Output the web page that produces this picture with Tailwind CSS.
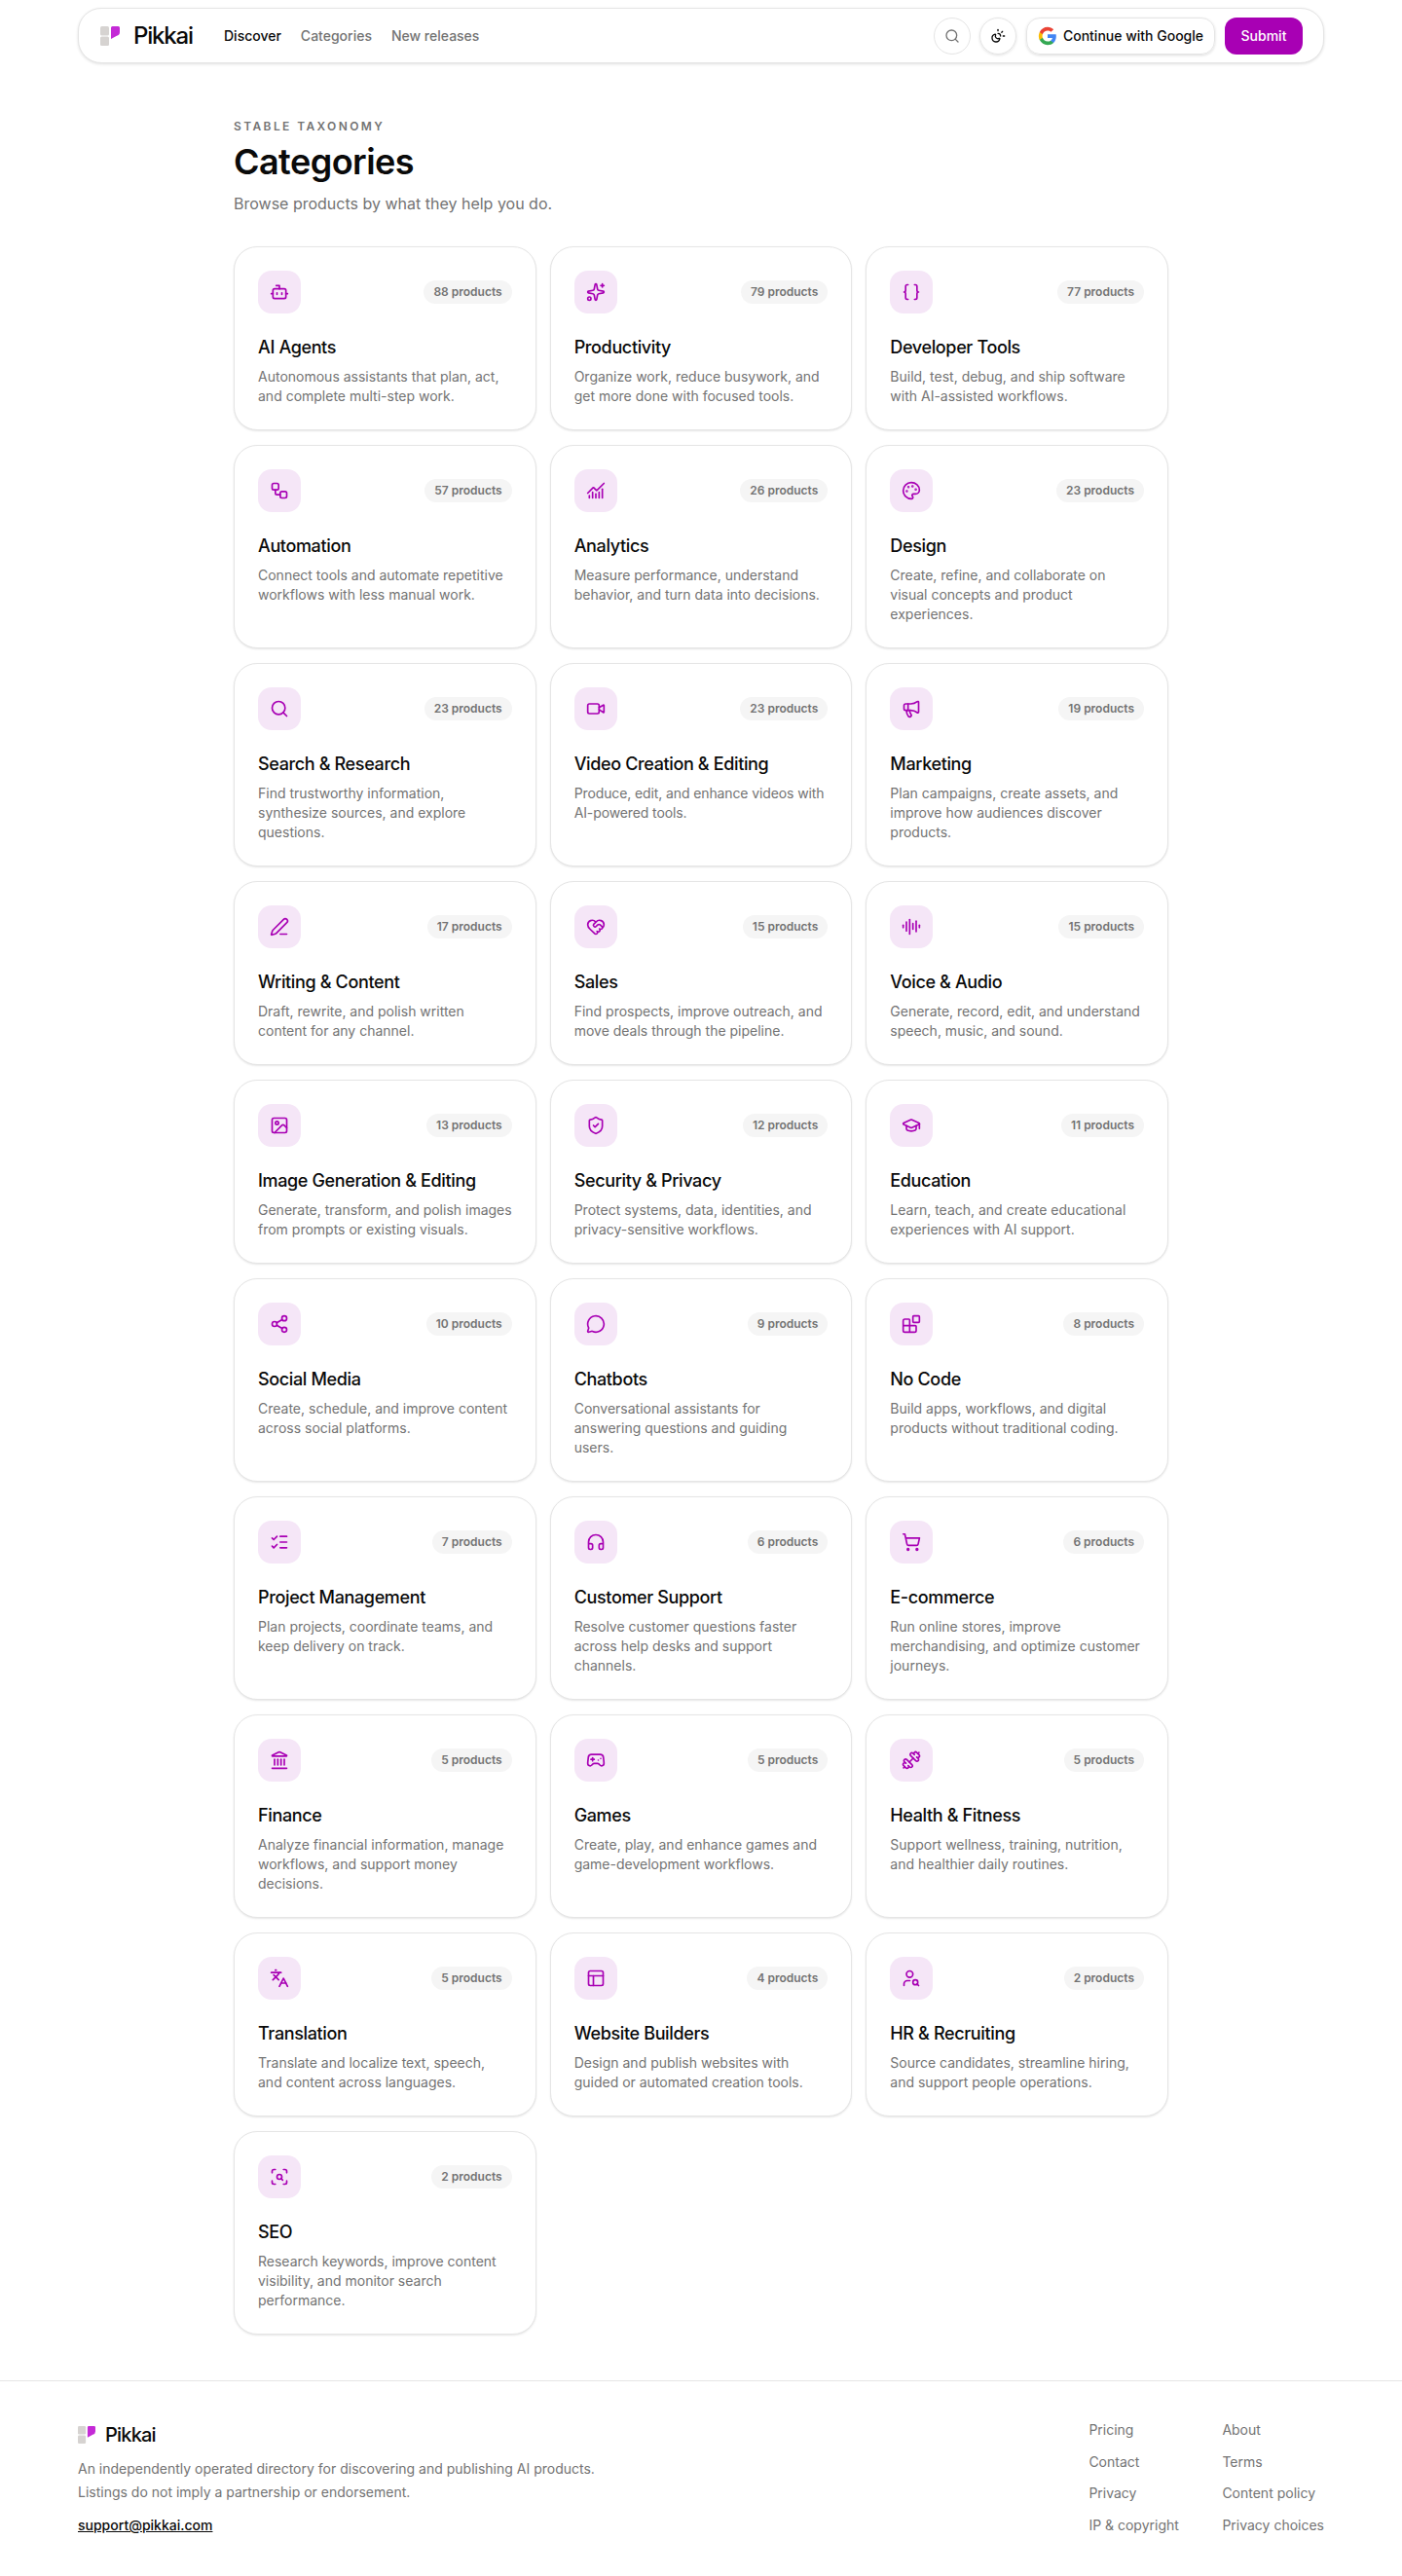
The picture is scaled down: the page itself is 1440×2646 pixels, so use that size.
<!DOCTYPE html>
<html lang="en">
<head>
<meta charset="utf-8">
<title>Categories - Pikkai</title>
<script src="https://cdn.jsdelivr.net/npm/@tailwindcss/browser@4"></script>
</head>
<body class="bg-white font-['Inter',sans-serif] text-[#0a0a0a] h-[2646px] overflow-hidden">
<header class="pt-[8px] px-[80px]">
  <nav class="h-[57px] rounded-[24px] border border-[#e5e5e5] shadow-[0_1px_3px_rgba(0,0,0,0.12)] bg-white flex items-center justify-between pl-[22px] pr-[21px]">
    <div class="flex items-center">
      <a class="flex items-center gap-[14px] w-[127px]">
        <svg viewBox="0 0 20 20" class="w-5 h-5 shrink-0"><rect x="0" y="0" width="9" height="9.5" rx="1.5" fill="#d6d3d1"/><rect x="0" y="10.5" width="9" height="9.5" rx="1.5" fill="#d6d3d1"/><path d="M11 1.5a1.5 1.5 0 0 1 1.5-1.5H18.5a1.5 1.5 0 0 1 1.5 1.5V6a4 4 0 0 1-3 3.8L11 13z" fill="#c42ad6"/></svg>
        <span class="text-[24px] leading-none font-medium tracking-[-0.05em] text-[#0a0a0a]">Pikkai</span>
      </a>
      <div class="flex items-center gap-[20px] text-[14px] font-medium">
        <a class="text-[#0a0a0a]">Discover</a>
        <a class="text-[#737373]">Categories</a>
        <a class="text-[#737373]">New releases</a>
      </div>
    </div>
    <div class="flex items-center">
      <button class="w-[38px] h-[38px] rounded-full border border-[#e5e5e5] flex items-center justify-center text-[#737373]">
        <svg viewBox="0 0 24 24" class="w-4 h-4" fill="none" stroke="currentColor" stroke-width="2" stroke-linecap="round" stroke-linejoin="round"><path d="m21 21-4.34-4.34"/><circle cx="11" cy="11" r="8"/></svg>
      </button>
      <button class="ml-[9px] w-[38px] h-[38px] rounded-full border border-[#e5e5e5] shadow-[0_1px_3px_rgba(0,0,0,0.12)] flex items-center justify-center text-[#0a0a0a]">
        <svg viewBox="0 0 24 24" class="w-4 h-4" fill="none" stroke="currentColor" stroke-width="2" stroke-linecap="round" stroke-linejoin="round"><path d="M12 2v2"/><path d="M14.837 16.385a6 6 0 1 1-7.223-7.222c.624-.147.97.66.715 1.248a4 4 0 0 0 5.26 5.259c.589-.255 1.396.09 1.248.715"/><path d="M16 12a4 4 0 0 0-4-4"/><path d="m19 5-1.256 1.256"/><path d="M20 12h2"/></svg>
      </button>
      <button class="ml-[10px] w-[194px] h-[38px] rounded-[14px] border border-[#e5e5e5] shadow-[0_1px_3px_rgba(0,0,0,0.14)] flex items-center justify-center gap-[6px] text-[14px] font-medium text-[#0a0a0a]">
        <svg viewBox="0 0 24 24" class="w-5 h-5"><path fill="#4285F4" d="M22.56 12.25c0-.78-.07-1.53-.2-2.25H12v4.26h5.92c-.26 1.37-1.04 2.53-2.21 3.31v2.77h3.57c2.08-1.92 3.28-4.74 3.28-8.09z"/><path fill="#34A853" d="M12 23c2.97 0 5.46-.98 7.28-2.66l-3.57-2.77c-.98.66-2.23 1.06-3.71 1.06-2.86 0-5.29-1.93-6.16-4.53H2.18v2.84C3.99 20.53 7.7 23 12 23z"/><path fill="#FBBC05" d="M5.84 14.09c-.22-.66-.35-1.36-.35-2.09s.13-1.43.35-2.09V7.07H2.18C1.43 8.55 1 10.22 1 12s.43 3.45 1.18 4.93l2.85-2.22.81-.62z"/><path fill="#EA4335" d="M12 5.38c1.62 0 3.06.56 4.21 1.64l3.15-3.15C17.45 2.09 14.97 1 12 1 7.7 1 3.99 3.47 2.18 7.07l3.66 2.84c.87-2.6 3.3-4.53 6.16-4.53z"/></svg>
        Continue with Google
      </button>
      <button class="ml-[10px] w-[80px] h-[38px] rounded-[12px] bg-[#a800b4] text-white text-[14px] font-medium">Submit</button>
    </div>
  </nav>
</header>

<main class="w-[960px] mx-auto pt-[57px]">
  <p class="text-[12px] leading-[16px] font-semibold tracking-[0.2em] text-[#737373]">STABLE TAXONOMY</p>
  <h1 class="mt-[8px] text-[36px] leading-[40px] font-semibold tracking-[-0.015em] text-[#0a0a0a]">Categories</h1>
  <p class="mt-[11px] text-[16px] leading-[24px] text-[#737373]">Browse products by what they help you do.</p>

  <div class="mt-[32px] grid grid-cols-3 gap-x-[14px] gap-y-[15px]">

    <a class="block rounded-[24px] border border-[#e5e5e5] shadow-[0_1px_2px_rgba(0,0,0,0.1)] bg-white p-6">
      <div class="flex items-center justify-between">
        <span class="w-[44px] h-[44px] rounded-[14px] bg-[#f5e6f7] text-[#a800b4] flex items-center justify-center"><svg viewBox="0 0 24 24" class="w-5 h-5" fill="none" stroke="currentColor" stroke-width="2" stroke-linecap="round" stroke-linejoin="round"><path d="M12 8V4H8"/><rect width="16" height="12" x="4" y="8" rx="2"/><path d="M2 14h2"/><path d="M20 14h2"/><path d="M15 13v2"/><path d="M9 13v2"/></svg></span>
        <span class="h-[24px] px-[10px] rounded-full bg-[#f5f5f5] text-[12px] leading-[24px] font-semibold text-[#737373]">88 products</span>
      </div>
      <h2 class="mt-[21px] text-[18px] leading-[28px] font-medium tracking-[-0.02em] text-[#0a0a0a]">AI Agents</h2>
      <p class="mt-[6px] text-[14px] leading-[20px] text-[#737373]">Autonomous assistants that plan, act, and complete multi-step work.</p>
    </a>

    <a class="block rounded-[24px] border border-[#e5e5e5] shadow-[0_1px_2px_rgba(0,0,0,0.1)] bg-white p-6">
      <div class="flex items-center justify-between">
        <span class="w-[44px] h-[44px] rounded-[14px] bg-[#f5e6f7] text-[#a800b4] flex items-center justify-center"><svg viewBox="0 0 24 24" class="w-5 h-5" fill="none" stroke="currentColor" stroke-width="2" stroke-linecap="round" stroke-linejoin="round"><path d="M11.017 2.814a1 1 0 0 1 1.966 0l1.051 5.558a2 2 0 0 0 1.594 1.594l5.558 1.051a1 1 0 0 1 0 1.966l-5.558 1.051a2 2 0 0 0-1.594 1.594l-1.051 5.558a1 1 0 0 1-1.966 0l-1.051-5.558a2 2 0 0 0-1.594-1.594l-5.558-1.051a1 1 0 0 1 0-1.966l5.558-1.051a2 2 0 0 0 1.594-1.594z"/><path d="M20 2v4"/><path d="M22 4h-4"/><circle cx="4" cy="20" r="2"/></svg></span>
        <span class="h-[24px] px-[10px] rounded-full bg-[#f5f5f5] text-[12px] leading-[24px] font-semibold text-[#737373]">79 products</span>
      </div>
      <h2 class="mt-[21px] text-[18px] leading-[28px] font-medium tracking-[-0.02em] text-[#0a0a0a]">Productivity</h2>
      <p class="mt-[6px] text-[14px] leading-[20px] text-[#737373]">Organize work, reduce busywork, and get more done with focused tools.</p>
    </a>

    <a class="block rounded-[24px] border border-[#e5e5e5] shadow-[0_1px_2px_rgba(0,0,0,0.1)] bg-white p-6">
      <div class="flex items-center justify-between">
        <span class="w-[44px] h-[44px] rounded-[14px] bg-[#f5e6f7] text-[#a800b4] flex items-center justify-center"><svg viewBox="0 0 24 24" class="w-5 h-5" fill="none" stroke="currentColor" stroke-width="2" stroke-linecap="round" stroke-linejoin="round"><path d="M8 3H7a2 2 0 0 0-2 2v5a2 2 0 0 1-2 2 2 2 0 0 1 2 2v5c0 1.1.9 2 2 2h1"/><path d="M16 21h1a2 2 0 0 0 2-2v-5c0-1.1.9-2 2-2a2 2 0 0 1-2-2V5a2 2 0 0 0-2-2h-1"/></svg></span>
        <span class="h-[24px] px-[10px] rounded-full bg-[#f5f5f5] text-[12px] leading-[24px] font-semibold text-[#737373]">77 products</span>
      </div>
      <h2 class="mt-[21px] text-[18px] leading-[28px] font-medium tracking-[-0.02em] text-[#0a0a0a]">Developer Tools</h2>
      <p class="mt-[6px] text-[14px] leading-[20px] text-[#737373]">Build, test, debug, and ship software with AI-assisted workflows.</p>
    </a>

    <a class="block rounded-[24px] border border-[#e5e5e5] shadow-[0_1px_2px_rgba(0,0,0,0.1)] bg-white p-6">
      <div class="flex items-center justify-between">
        <span class="w-[44px] h-[44px] rounded-[14px] bg-[#f5e6f7] text-[#a800b4] flex items-center justify-center"><svg viewBox="0 0 24 24" class="w-5 h-5" fill="none" stroke="currentColor" stroke-width="2" stroke-linecap="round" stroke-linejoin="round"><rect width="8" height="8" x="3" y="3" rx="2"/><path d="M7 11v4a2 2 0 0 0 2 2h4"/><rect width="8" height="8" x="13" y="13" rx="2"/></svg></span>
        <span class="h-[24px] px-[10px] rounded-full bg-[#f5f5f5] text-[12px] leading-[24px] font-semibold text-[#737373]">57 products</span>
      </div>
      <h2 class="mt-[21px] text-[18px] leading-[28px] font-medium tracking-[-0.02em] text-[#0a0a0a]">Automation</h2>
      <p class="mt-[6px] text-[14px] leading-[20px] text-[#737373]">Connect tools and automate repetitive workflows with less manual work.</p>
    </a>

    <a class="block rounded-[24px] border border-[#e5e5e5] shadow-[0_1px_2px_rgba(0,0,0,0.1)] bg-white p-6">
      <div class="flex items-center justify-between">
        <span class="w-[44px] h-[44px] rounded-[14px] bg-[#f5e6f7] text-[#a800b4] flex items-center justify-center"><svg viewBox="0 0 24 24" class="w-5 h-5" fill="none" stroke="currentColor" stroke-width="2" stroke-linecap="round" stroke-linejoin="round"><path d="M12 16v5"/><path d="M16 14v7"/><path d="M20 10v11"/><path d="m22 3-8.646 8.646a.5.5 0 0 1-.708 0L9.354 8.354a.5.5 0 0 0-.708 0L2 15"/><path d="M4 18v3"/><path d="M8 14v7"/></svg></span>
        <span class="h-[24px] px-[10px] rounded-full bg-[#f5f5f5] text-[12px] leading-[24px] font-semibold text-[#737373]">26 products</span>
      </div>
      <h2 class="mt-[21px] text-[18px] leading-[28px] font-medium tracking-[-0.02em] text-[#0a0a0a]">Analytics</h2>
      <p class="mt-[6px] text-[14px] leading-[20px] text-[#737373]">Measure performance, understand behavior, and turn data into decisions.</p>
    </a>

    <a class="block rounded-[24px] border border-[#e5e5e5] shadow-[0_1px_2px_rgba(0,0,0,0.1)] bg-white p-6">
      <div class="flex items-center justify-between">
        <span class="w-[44px] h-[44px] rounded-[14px] bg-[#f5e6f7] text-[#a800b4] flex items-center justify-center"><svg viewBox="0 0 24 24" class="w-5 h-5" fill="none" stroke="currentColor" stroke-width="2" stroke-linecap="round" stroke-linejoin="round"><path d="M12 22a1 1 0 0 1 0-20 10 9 0 0 1 10 9 5 5 0 0 1-5 5h-2.25a1.75 1.75 0 0 0-1.4 2.8l.3.4a1.75 1.75 0 0 1-1.4 2.8z"/><circle cx="13.5" cy="6.5" r=".5" fill="currentColor"/><circle cx="17.5" cy="10.5" r=".5" fill="currentColor"/><circle cx="6.5" cy="12.5" r=".5" fill="currentColor"/><circle cx="8.5" cy="7.5" r=".5" fill="currentColor"/></svg></span>
        <span class="h-[24px] px-[10px] rounded-full bg-[#f5f5f5] text-[12px] leading-[24px] font-semibold text-[#737373]">23 products</span>
      </div>
      <h2 class="mt-[21px] text-[18px] leading-[28px] font-medium tracking-[-0.02em] text-[#0a0a0a]">Design</h2>
      <p class="mt-[6px] text-[14px] leading-[20px] text-[#737373]">Create, refine, and collaborate on visual concepts and product experiences.</p>
    </a>

    <a class="block rounded-[24px] border border-[#e5e5e5] shadow-[0_1px_2px_rgba(0,0,0,0.1)] bg-white p-6">
      <div class="flex items-center justify-between">
        <span class="w-[44px] h-[44px] rounded-[14px] bg-[#f5e6f7] text-[#a800b4] flex items-center justify-center"><svg viewBox="0 0 24 24" class="w-5 h-5" fill="none" stroke="currentColor" stroke-width="2" stroke-linecap="round" stroke-linejoin="round"><path d="m21 21-4.34-4.34"/><circle cx="11" cy="11" r="8"/></svg></span>
        <span class="h-[24px] px-[10px] rounded-full bg-[#f5f5f5] text-[12px] leading-[24px] font-semibold text-[#737373]">23 products</span>
      </div>
      <h2 class="mt-[21px] text-[18px] leading-[28px] font-medium tracking-[-0.02em] text-[#0a0a0a]">Search &amp; Research</h2>
      <p class="mt-[6px] text-[14px] leading-[20px] text-[#737373]">Find trustworthy information, synthesize sources, and explore questions.</p>
    </a>

    <a class="block rounded-[24px] border border-[#e5e5e5] shadow-[0_1px_2px_rgba(0,0,0,0.1)] bg-white p-6">
      <div class="flex items-center justify-between">
        <span class="w-[44px] h-[44px] rounded-[14px] bg-[#f5e6f7] text-[#a800b4] flex items-center justify-center"><svg viewBox="0 0 24 24" class="w-5 h-5" fill="none" stroke="currentColor" stroke-width="2" stroke-linecap="round" stroke-linejoin="round"><path d="m16 13 5.223 3.482a.5.5 0 0 0 .777-.416V7.87a.5.5 0 0 0-.752-.432L16 10.5"/><rect x="2" y="6" width="14" height="12" rx="2"/></svg></span>
        <span class="h-[24px] px-[10px] rounded-full bg-[#f5f5f5] text-[12px] leading-[24px] font-semibold text-[#737373]">23 products</span>
      </div>
      <h2 class="mt-[21px] text-[18px] leading-[28px] font-medium tracking-[-0.02em] text-[#0a0a0a]">Video Creation &amp; Editing</h2>
      <p class="mt-[6px] text-[14px] leading-[20px] tracking-[-0.008em] text-[#737373]">Produce, edit, and enhance videos with AI-powered tools.</p>
    </a>

    <a class="block rounded-[24px] border border-[#e5e5e5] shadow-[0_1px_2px_rgba(0,0,0,0.1)] bg-white p-6">
      <div class="flex items-center justify-between">
        <span class="w-[44px] h-[44px] rounded-[14px] bg-[#f5e6f7] text-[#a800b4] flex items-center justify-center"><svg viewBox="0 0 24 24" class="w-5 h-5" fill="none" stroke="currentColor" stroke-width="2" stroke-linecap="round" stroke-linejoin="round"><path d="M11 6a13 13 0 0 0 8.4-2.8A1 1 0 0 1 21 4v12a1 1 0 0 1-1.6.8A13 13 0 0 0 11 14H5a2 2 0 0 1-2-2V8a2 2 0 0 1 2-2z"/><path d="M6 14a12 12 0 0 0 2.4 7.2 2 2 0 0 0 3.2-2.4A8 8 0 0 1 10 14"/><path d="M8 6v8"/></svg></span>
        <span class="h-[24px] px-[10px] rounded-full bg-[#f5f5f5] text-[12px] leading-[24px] font-semibold text-[#737373]">19 products</span>
      </div>
      <h2 class="mt-[21px] text-[18px] leading-[28px] font-medium tracking-[-0.02em] text-[#0a0a0a]">Marketing</h2>
      <p class="mt-[6px] text-[14px] leading-[20px] text-[#737373]">Plan campaigns, create assets, and improve how audiences discover products.</p>
    </a>

    <a class="block rounded-[24px] border border-[#e5e5e5] shadow-[0_1px_2px_rgba(0,0,0,0.1)] bg-white p-6">
      <div class="flex items-center justify-between">
        <span class="w-[44px] h-[44px] rounded-[14px] bg-[#f5e6f7] text-[#a800b4] flex items-center justify-center"><svg viewBox="0 0 24 24" class="w-5 h-5" fill="none" stroke="currentColor" stroke-width="2" stroke-linecap="round" stroke-linejoin="round"><path d="M13 21h8"/><path d="M21.174 6.812a1 1 0 0 0-3.986-3.987L3.842 16.174a2 2 0 0 0-.5.83l-1.321 4.352a.5.5 0 0 0 .623.622l4.353-1.32a2 2 0 0 0 .83-.497z"/></svg></span>
        <span class="h-[24px] px-[10px] rounded-full bg-[#f5f5f5] text-[12px] leading-[24px] font-semibold text-[#737373]">17 products</span>
      </div>
      <h2 class="mt-[21px] text-[18px] leading-[28px] font-medium tracking-[-0.02em] text-[#0a0a0a]">Writing &amp; Content</h2>
      <p class="mt-[6px] text-[14px] leading-[20px] text-[#737373]">Draft, rewrite, and polish written content for any channel.</p>
    </a>

    <a class="block rounded-[24px] border border-[#e5e5e5] shadow-[0_1px_2px_rgba(0,0,0,0.1)] bg-white p-6">
      <div class="flex items-center justify-between">
        <span class="w-[44px] h-[44px] rounded-[14px] bg-[#f5e6f7] text-[#a800b4] flex items-center justify-center"><svg viewBox="0 0 24 24" class="w-5 h-5" fill="none" stroke="currentColor" stroke-width="2" stroke-linecap="round" stroke-linejoin="round"><path d="M19.414 14.414C21 12.828 22 11.5 22 9.5a5.5 5.5 0 0 0-9.591-3.676.6.6 0 0 1-.818.001A5.5 5.5 0 0 0 2 9.5c0 2.3 1.5 4 3 5.5l5.535 5.362a2 2 0 0 0 2.879.052 2.12 2.12 0 0 0-.004-3 2.124 2.124 0 1 0 3-3 2.124 2.124 0 0 0 3.004 0 2 2 0 0 0 0-2.828l-1.881-1.882a2.41 2.41 0 0 0-3.409 0l-1.71 1.71a2 2 0 0 1-2.828 0 2 2 0 0 1 0-2.828l2.823-2.762"/></svg></span>
        <span class="h-[24px] px-[10px] rounded-full bg-[#f5f5f5] text-[12px] leading-[24px] font-semibold text-[#737373]">15 products</span>
      </div>
      <h2 class="mt-[21px] text-[18px] leading-[28px] font-medium tracking-[-0.02em] text-[#0a0a0a]">Sales</h2>
      <p class="mt-[6px] text-[14px] leading-[20px] text-[#737373]">Find prospects, improve outreach, and move deals through the pipeline.</p>
    </a>

    <a class="block rounded-[24px] border border-[#e5e5e5] shadow-[0_1px_2px_rgba(0,0,0,0.1)] bg-white p-6">
      <div class="flex items-center justify-between">
        <span class="w-[44px] h-[44px] rounded-[14px] bg-[#f5e6f7] text-[#a800b4] flex items-center justify-center"><svg viewBox="0 0 24 24" class="w-5 h-5" fill="none" stroke="currentColor" stroke-width="2" stroke-linecap="round" stroke-linejoin="round"><path d="M2 10v3"/><path d="M6 6v11"/><path d="M10 3v18"/><path d="M14 8v7"/><path d="M18 5v13"/><path d="M22 10v3"/></svg></span>
        <span class="h-[24px] px-[10px] rounded-full bg-[#f5f5f5] text-[12px] leading-[24px] font-semibold text-[#737373]">15 products</span>
      </div>
      <h2 class="mt-[21px] text-[18px] leading-[28px] font-medium tracking-[-0.02em] text-[#0a0a0a]">Voice &amp; Audio</h2>
      <p class="mt-[6px] text-[14px] leading-[20px] text-[#737373]">Generate, record, edit, and understand speech, music, and sound.</p>
    </a>

    <a class="block rounded-[24px] border border-[#e5e5e5] shadow-[0_1px_2px_rgba(0,0,0,0.1)] bg-white p-6">
      <div class="flex items-center justify-between">
        <span class="w-[44px] h-[44px] rounded-[14px] bg-[#f5e6f7] text-[#a800b4] flex items-center justify-center"><svg viewBox="0 0 24 24" class="w-5 h-5" fill="none" stroke="currentColor" stroke-width="2" stroke-linecap="round" stroke-linejoin="round"><rect width="18" height="18" x="3" y="3" rx="2"/><circle cx="9" cy="9" r="2"/><path d="m21 15-3.086-3.086a2 2 0 0 0-2.828 0L6 21"/></svg></span>
        <span class="h-[24px] px-[10px] rounded-full bg-[#f5f5f5] text-[12px] leading-[24px] font-semibold text-[#737373]">13 products</span>
      </div>
      <h2 class="mt-[21px] text-[18px] leading-[28px] font-medium tracking-[-0.02em] text-[#0a0a0a]">Image Generation &amp; Editing</h2>
      <p class="mt-[6px] text-[14px] leading-[20px] text-[#737373]">Generate, transform, and polish images from prompts or existing visuals.</p>
    </a>

    <a class="block rounded-[24px] border border-[#e5e5e5] shadow-[0_1px_2px_rgba(0,0,0,0.1)] bg-white p-6">
      <div class="flex items-center justify-between">
        <span class="w-[44px] h-[44px] rounded-[14px] bg-[#f5e6f7] text-[#a800b4] flex items-center justify-center"><svg viewBox="0 0 24 24" class="w-5 h-5" fill="none" stroke="currentColor" stroke-width="2" stroke-linecap="round" stroke-linejoin="round"><path d="M20 13c0 5-3.5 7.5-7.66 8.95a1 1 0 0 1-.67-.01C7.5 20.5 4 18 4 13V6a1 1 0 0 1 1-1c2 0 4.5-1.2 6.24-2.72a1.17 1.17 0 0 1 1.52 0C14.51 3.81 17 5 19 5a1 1 0 0 1 1 1z"/><path d="m9 12 2 2 4-4"/></svg></span>
        <span class="h-[24px] px-[10px] rounded-full bg-[#f5f5f5] text-[12px] leading-[24px] font-semibold text-[#737373]">12 products</span>
      </div>
      <h2 class="mt-[21px] text-[18px] leading-[28px] font-medium tracking-[-0.02em] text-[#0a0a0a]">Security &amp; Privacy</h2>
      <p class="mt-[6px] text-[14px] leading-[20px] text-[#737373]">Protect systems, data, identities, and privacy-sensitive workflows.</p>
    </a>

    <a class="block rounded-[24px] border border-[#e5e5e5] shadow-[0_1px_2px_rgba(0,0,0,0.1)] bg-white p-6">
      <div class="flex items-center justify-between">
        <span class="w-[44px] h-[44px] rounded-[14px] bg-[#f5e6f7] text-[#a800b4] flex items-center justify-center"><svg viewBox="0 0 24 24" class="w-5 h-5" fill="none" stroke="currentColor" stroke-width="2" stroke-linecap="round" stroke-linejoin="round"><path d="M21.42 10.922a1 1 0 0 0-.019-1.838L12.83 5.18a2 2 0 0 0-1.66 0L2.6 9.08a1 1 0 0 0 0 1.832l8.57 3.908a2 2 0 0 0 1.66 0z"/><path d="M22 10v6"/><path d="M6 12.5V16a6 3 0 0 0 12 0v-3.5"/></svg></span>
        <span class="h-[24px] px-[10px] rounded-full bg-[#f5f5f5] text-[12px] leading-[24px] font-semibold text-[#737373]">11 products</span>
      </div>
      <h2 class="mt-[21px] text-[18px] leading-[28px] font-medium tracking-[-0.02em] text-[#0a0a0a]">Education</h2>
      <p class="mt-[6px] text-[14px] leading-[20px] text-[#737373]">Learn, teach, and create educational experiences with AI support.</p>
    </a>

    <a class="block rounded-[24px] border border-[#e5e5e5] shadow-[0_1px_2px_rgba(0,0,0,0.1)] bg-white p-6">
      <div class="flex items-center justify-between">
        <span class="w-[44px] h-[44px] rounded-[14px] bg-[#f5e6f7] text-[#a800b4] flex items-center justify-center"><svg viewBox="0 0 24 24" class="w-5 h-5" fill="none" stroke="currentColor" stroke-width="2" stroke-linecap="round" stroke-linejoin="round"><circle cx="18" cy="5" r="3"/><circle cx="6" cy="12" r="3"/><circle cx="18" cy="19" r="3"/><line x1="8.59" x2="15.42" y1="13.51" y2="17.49"/><line x1="15.41" x2="8.59" y1="6.51" y2="10.49"/></svg></span>
        <span class="h-[24px] px-[10px] rounded-full bg-[#f5f5f5] text-[12px] leading-[24px] font-semibold text-[#737373]">10 products</span>
      </div>
      <h2 class="mt-[21px] text-[18px] leading-[28px] font-medium tracking-[-0.02em] text-[#0a0a0a]">Social Media</h2>
      <p class="mt-[6px] text-[14px] leading-[20px] text-[#737373]">Create, schedule, and improve content across social platforms.</p>
    </a>

    <a class="block rounded-[24px] border border-[#e5e5e5] shadow-[0_1px_2px_rgba(0,0,0,0.1)] bg-white p-6">
      <div class="flex items-center justify-between">
        <span class="w-[44px] h-[44px] rounded-[14px] bg-[#f5e6f7] text-[#a800b4] flex items-center justify-center"><svg viewBox="0 0 24 24" class="w-5 h-5" fill="none" stroke="currentColor" stroke-width="2" stroke-linecap="round" stroke-linejoin="round"><path d="M2.992 16.342a2 2 0 0 1 .094 1.167l-1.065 3.29a1 1 0 0 0 1.236 1.168l3.413-.998a2 2 0 0 1 1.099.092 10 10 0 1 0-4.777-4.719"/></svg></span>
        <span class="h-[24px] px-[10px] rounded-full bg-[#f5f5f5] text-[12px] leading-[24px] font-semibold text-[#737373]">9 products</span>
      </div>
      <h2 class="mt-[21px] text-[18px] leading-[28px] font-medium tracking-[-0.02em] text-[#0a0a0a]">Chatbots</h2>
      <p class="mt-[6px] text-[14px] leading-[20px] text-[#737373]">Conversational assistants for answering questions and guiding users.</p>
    </a>

    <a class="block rounded-[24px] border border-[#e5e5e5] shadow-[0_1px_2px_rgba(0,0,0,0.1)] bg-white p-6">
      <div class="flex items-center justify-between">
        <span class="w-[44px] h-[44px] rounded-[14px] bg-[#f5e6f7] text-[#a800b4] flex items-center justify-center"><svg viewBox="0 0 24 24" class="w-5 h-5" fill="none" stroke="currentColor" stroke-width="2" stroke-linecap="round" stroke-linejoin="round"><path d="M10 22V7a1 1 0 0 0-1-1H4a2 2 0 0 0-2 2v12a2 2 0 0 0 2 2h12a2 2 0 0 0 2-2v-5a1 1 0 0 0-1-1H2"/><rect x="14" y="2" width="8" height="8" rx="1"/></svg></span>
        <span class="h-[24px] px-[10px] rounded-full bg-[#f5f5f5] text-[12px] leading-[24px] font-semibold text-[#737373]">8 products</span>
      </div>
      <h2 class="mt-[21px] text-[18px] leading-[28px] font-medium tracking-[-0.02em] text-[#0a0a0a]">No Code</h2>
      <p class="mt-[6px] text-[14px] leading-[20px] text-[#737373]">Build apps, workflows, and digital products without traditional coding.</p>
    </a>

    <a class="block rounded-[24px] border border-[#e5e5e5] shadow-[0_1px_2px_rgba(0,0,0,0.1)] bg-white p-6">
      <div class="flex items-center justify-between">
        <span class="w-[44px] h-[44px] rounded-[14px] bg-[#f5e6f7] text-[#a800b4] flex items-center justify-center"><svg viewBox="0 0 24 24" class="w-5 h-5" fill="none" stroke="currentColor" stroke-width="2" stroke-linecap="round" stroke-linejoin="round"><path d="M13 5h8"/><path d="M13 12h8"/><path d="M13 19h8"/><path d="m3 17 2 2 4-4"/><path d="m3 7 2 2 4-4"/></svg></span>
        <span class="h-[24px] px-[10px] rounded-full bg-[#f5f5f5] text-[12px] leading-[24px] font-semibold text-[#737373]">7 products</span>
      </div>
      <h2 class="mt-[21px] text-[18px] leading-[28px] font-medium tracking-[-0.02em] text-[#0a0a0a]">Project Management</h2>
      <p class="mt-[6px] text-[14px] leading-[20px] text-[#737373]">Plan projects, coordinate teams, and keep delivery on track.</p>
    </a>

    <a class="block rounded-[24px] border border-[#e5e5e5] shadow-[0_1px_2px_rgba(0,0,0,0.1)] bg-white p-6">
      <div class="flex items-center justify-between">
        <span class="w-[44px] h-[44px] rounded-[14px] bg-[#f5e6f7] text-[#a800b4] flex items-center justify-center"><svg viewBox="0 0 24 24" class="w-5 h-5" fill="none" stroke="currentColor" stroke-width="2" stroke-linecap="round" stroke-linejoin="round"><path d="M3 14h3a2 2 0 0 1 2 2v3a2 2 0 0 1-2 2H5a2 2 0 0 1-2-2v-7a9 9 0 0 1 18 0v7a2 2 0 0 1-2 2h-1a2 2 0 0 1-2-2v-3a2 2 0 0 1 2-2h3"/></svg></span>
        <span class="h-[24px] px-[10px] rounded-full bg-[#f5f5f5] text-[12px] leading-[24px] font-semibold text-[#737373]">6 products</span>
      </div>
      <h2 class="mt-[21px] text-[18px] leading-[28px] font-medium tracking-[-0.02em] text-[#0a0a0a]">Customer Support</h2>
      <p class="mt-[6px] text-[14px] leading-[20px] text-[#737373]">Resolve customer questions faster across help desks and support channels.</p>
    </a>

    <a class="block rounded-[24px] border border-[#e5e5e5] shadow-[0_1px_2px_rgba(0,0,0,0.1)] bg-white p-6">
      <div class="flex items-center justify-between">
        <span class="w-[44px] h-[44px] rounded-[14px] bg-[#f5e6f7] text-[#a800b4] flex items-center justify-center"><svg viewBox="0 0 24 24" class="w-5 h-5" fill="none" stroke="currentColor" stroke-width="2" stroke-linecap="round" stroke-linejoin="round"><circle cx="8" cy="21" r="1"/><circle cx="19" cy="21" r="1"/><path d="M2.05 2.05h2l2.66 12.42a2 2 0 0 0 2 1.58h9.78a2 2 0 0 0 1.95-1.57l1.65-7.43H5.12"/></svg></span>
        <span class="h-[24px] px-[10px] rounded-full bg-[#f5f5f5] text-[12px] leading-[24px] font-semibold text-[#737373]">6 products</span>
      </div>
      <h2 class="mt-[21px] text-[18px] leading-[28px] font-medium tracking-[-0.02em] text-[#0a0a0a]">E-commerce</h2>
      <p class="mt-[6px] text-[14px] leading-[20px] text-[#737373]">Run online stores, improve merchandising, and optimize customer journeys.</p>
    </a>

    <a class="block rounded-[24px] border border-[#e5e5e5] shadow-[0_1px_2px_rgba(0,0,0,0.1)] bg-white p-6">
      <div class="flex items-center justify-between">
        <span class="w-[44px] h-[44px] rounded-[14px] bg-[#f5e6f7] text-[#a800b4] flex items-center justify-center"><svg viewBox="0 0 24 24" class="w-5 h-5" fill="none" stroke="currentColor" stroke-width="2" stroke-linecap="round" stroke-linejoin="round"><path d="M10 18v-7"/><path d="M11.12 2.198a2 2 0 0 1 1.76.006l7.866 3.847c.476.233.31.949-.22.949H3.474c-.53 0-.695-.716-.22-.949z"/><path d="M14 18v-7"/><path d="M18 18v-7"/><path d="M3 22h18"/><path d="M6 18v-7"/></svg></span>
        <span class="h-[24px] px-[10px] rounded-full bg-[#f5f5f5] text-[12px] leading-[24px] font-semibold text-[#737373]">5 products</span>
      </div>
      <h2 class="mt-[21px] text-[18px] leading-[28px] font-medium tracking-[-0.02em] text-[#0a0a0a]">Finance</h2>
      <p class="mt-[6px] text-[14px] leading-[20px] text-[#737373]">Analyze financial information, manage workflows, and support money decisions.</p>
    </a>

    <a class="block rounded-[24px] border border-[#e5e5e5] shadow-[0_1px_2px_rgba(0,0,0,0.1)] bg-white p-6">
      <div class="flex items-center justify-between">
        <span class="w-[44px] h-[44px] rounded-[14px] bg-[#f5e6f7] text-[#a800b4] flex items-center justify-center"><svg viewBox="0 0 24 24" class="w-5 h-5" fill="none" stroke="currentColor" stroke-width="2" stroke-linecap="round" stroke-linejoin="round"><line x1="6" x2="10" y1="11" y2="11"/><line x1="8" x2="8" y1="9" y2="13"/><line x1="15" x2="15.01" y1="12" y2="12"/><line x1="18" x2="18.01" y1="10" y2="10"/><path d="M17.32 5H6.68a4 4 0 0 0-3.978 3.59c-.006.052-.01.101-.017.152C2.604 9.416 2 14.456 2 16a3 3 0 0 0 3 3c1 0 1.5-.5 2-1l1.414-1.414A2 2 0 0 1 9.828 16h4.344a2 2 0 0 1 1.414.586L17 18c.5.5 1 1 2 1a3 3 0 0 0 3-3c0-1.545-.604-6.584-.685-7.258-.007-.05-.011-.1-.017-.151A4 4 0 0 0 17.32 5z"/></svg></span>
        <span class="h-[24px] px-[10px] rounded-full bg-[#f5f5f5] text-[12px] leading-[24px] font-semibold text-[#737373]">5 products</span>
      </div>
      <h2 class="mt-[21px] text-[18px] leading-[28px] font-medium tracking-[-0.02em] text-[#0a0a0a]">Games</h2>
      <p class="mt-[6px] text-[14px] leading-[20px] text-[#737373]">Create, play, and enhance games and game-development workflows.</p>
    </a>

    <a class="block rounded-[24px] border border-[#e5e5e5] shadow-[0_1px_2px_rgba(0,0,0,0.1)] bg-white p-6">
      <div class="flex items-center justify-between">
        <span class="w-[44px] h-[44px] rounded-[14px] bg-[#f5e6f7] text-[#a800b4] flex items-center justify-center"><svg viewBox="0 0 24 24" class="w-5 h-5" fill="none" stroke="currentColor" stroke-width="2" stroke-linecap="round" stroke-linejoin="round"><path d="M17.596 12.768a2 2 0 1 0 2.829-2.829l-1.768-1.767a2 2 0 0 0 2.828-2.829l-2.828-2.828a2 2 0 0 0-2.829 2.828l-1.767-1.768a2 2 0 1 0-2.829 2.829z"/><path d="m2.5 21.5 1.4-1.4"/><path d="m20.1 3.9 1.4-1.4"/><path d="M5.343 21.485a2 2 0 1 0 2.829-2.828l1.767 1.768a2 2 0 1 0 2.829-2.829l-6.364-6.364a2 2 0 1 0-2.829 2.829l1.768 1.767a2 2 0 0 0-2.828 2.829z"/><path d="m9.6 14.4 4.8-4.8"/></svg></span>
        <span class="h-[24px] px-[10px] rounded-full bg-[#f5f5f5] text-[12px] leading-[24px] font-semibold text-[#737373]">5 products</span>
      </div>
      <h2 class="mt-[21px] text-[18px] leading-[28px] font-medium tracking-[-0.02em] text-[#0a0a0a]">Health &amp; Fitness</h2>
      <p class="mt-[6px] text-[14px] leading-[20px] text-[#737373]">Support wellness, training, nutrition, and healthier daily routines.</p>
    </a>

    <a class="block rounded-[24px] border border-[#e5e5e5] shadow-[0_1px_2px_rgba(0,0,0,0.1)] bg-white p-6">
      <div class="flex items-center justify-between">
        <span class="w-[44px] h-[44px] rounded-[14px] bg-[#f5e6f7] text-[#a800b4] flex items-center justify-center"><svg viewBox="0 0 24 24" class="w-5 h-5" fill="none" stroke="currentColor" stroke-width="2" stroke-linecap="round" stroke-linejoin="round"><path d="m5 8 6 6"/><path d="m4 14 6-6 2-3"/><path d="M2 5h12"/><path d="M7 2h1"/><path d="m22 22-5-10-5 10"/><path d="M14 18h6"/></svg></span>
        <span class="h-[24px] px-[10px] rounded-full bg-[#f5f5f5] text-[12px] leading-[24px] font-semibold text-[#737373]">5 products</span>
      </div>
      <h2 class="mt-[21px] text-[18px] leading-[28px] font-medium tracking-[-0.02em] text-[#0a0a0a]">Translation</h2>
      <p class="mt-[6px] text-[14px] leading-[20px] text-[#737373]">Translate and localize text, speech, and content across languages.</p>
    </a>

    <a class="block rounded-[24px] border border-[#e5e5e5] shadow-[0_1px_2px_rgba(0,0,0,0.1)] bg-white p-6">
      <div class="flex items-center justify-between">
        <span class="w-[44px] h-[44px] rounded-[14px] bg-[#f5e6f7] text-[#a800b4] flex items-center justify-center"><svg viewBox="0 0 24 24" class="w-5 h-5" fill="none" stroke="currentColor" stroke-width="2" stroke-linecap="round" stroke-linejoin="round"><rect width="18" height="18" x="3" y="3" rx="2"/><path d="M3 9h18"/><path d="M9 21V9"/></svg></span>
        <span class="h-[24px] px-[10px] rounded-full bg-[#f5f5f5] text-[12px] leading-[24px] font-semibold text-[#737373]">4 products</span>
      </div>
      <h2 class="mt-[21px] text-[18px] leading-[28px] font-medium tracking-[-0.02em] text-[#0a0a0a]">Website Builders</h2>
      <p class="mt-[6px] text-[14px] leading-[20px] text-[#737373]">Design and publish websites with guided or automated creation tools.</p>
    </a>

    <a class="block rounded-[24px] border border-[#e5e5e5] shadow-[0_1px_2px_rgba(0,0,0,0.1)] bg-white p-6">
      <div class="flex items-center justify-between">
        <span class="w-[44px] h-[44px] rounded-[14px] bg-[#f5e6f7] text-[#a800b4] flex items-center justify-center"><svg viewBox="0 0 24 24" class="w-5 h-5" fill="none" stroke="currentColor" stroke-width="2" stroke-linecap="round" stroke-linejoin="round"><circle cx="10" cy="7" r="4"/><path d="M10.3 15H7a4 4 0 0 0-4 4v2"/><circle cx="17" cy="17" r="3"/><path d="m21 21-1.9-1.9"/></svg></span>
        <span class="h-[24px] px-[10px] rounded-full bg-[#f5f5f5] text-[12px] leading-[24px] font-semibold text-[#737373]">2 products</span>
      </div>
      <h2 class="mt-[21px] text-[18px] leading-[28px] font-medium tracking-[-0.02em] text-[#0a0a0a]">HR &amp; Recruiting</h2>
      <p class="mt-[6px] text-[14px] leading-[20px] text-[#737373]">Source candidates, streamline hiring, and support people operations.</p>
    </a>

    <a class="block rounded-[24px] border border-[#e5e5e5] shadow-[0_1px_2px_rgba(0,0,0,0.1)] bg-white p-6">
      <div class="flex items-center justify-between">
        <span class="w-[44px] h-[44px] rounded-[14px] bg-[#f5e6f7] text-[#a800b4] flex items-center justify-center"><svg viewBox="0 0 24 24" class="w-5 h-5" fill="none" stroke="currentColor" stroke-width="2" stroke-linecap="round" stroke-linejoin="round"><path d="M3 7V5a2 2 0 0 1 2-2h2"/><path d="M17 3h2a2 2 0 0 1 2 2v2"/><path d="M21 17v2a2 2 0 0 1-2 2h-2"/><path d="M7 21H5a2 2 0 0 1-2-2v-2"/><circle cx="12" cy="12" r="3"/><path d="m16 16-1.9-1.9"/></svg></span>
        <span class="h-[24px] px-[10px] rounded-full bg-[#f5f5f5] text-[12px] leading-[24px] font-semibold text-[#737373]">2 products</span>
      </div>
      <h2 class="mt-[21px] text-[18px] leading-[28px] font-medium tracking-[-0.02em] text-[#0a0a0a]">SEO</h2>
      <p class="mt-[6px] text-[14px] leading-[20px] text-[#737373]">Research keywords, improve content visibility, and monitor search performance.</p>
    </a>

  </div>
</main>

<footer class="mt-[47px] border-t border-[#e5e5e5] px-[80px] pt-[40px] flex justify-between">
  <div>
    <a class="mt-[1px] flex items-center gap-[10px]">
      <svg viewBox="0 0 20 20" class="w-[18px] h-[18px] shrink-0"><rect x="0" y="0" width="9" height="9.5" rx="1.5" fill="#d6d3d1"/><rect x="0" y="10.5" width="9" height="9.5" rx="1.5" fill="#d6d3d1"/><path d="M11 1.5a1.5 1.5 0 0 1 1.5-1.5H18.5a1.5 1.5 0 0 1 1.5 1.5V6a4 4 0 0 1-3 3.8L11 13z" fill="#c42ad6"/></svg>
      <span class="text-[20px] leading-[28px] font-medium tracking-[-0.04em] text-[#0a0a0a]">Pikkai</span>
    </a>
    <p class="mt-[9px] text-[14px] leading-[24px] text-[#737373]">An independently operated directory for discovering and publishing AI products.<br>Listings do not imply a partnership or endorsement.</p>
    <a class="mt-[12px] block text-[14px] leading-[20px] font-medium text-[#0a0a0a] underline">support@pikkai.com</a>
  </div>
  <div class="flex gap-[44px] text-[14px] leading-[20px] text-[#737373]">
    <div class="flex flex-col gap-[12.5px] w-[93px]">
      <a>Pricing</a><a>Contact</a><a>Privacy</a><a>IP &amp; copyright</a>
    </div>
    <div class="flex flex-col gap-[12.5px]">
      <a>About</a><a>Terms</a><a>Content policy</a><a>Privacy choices</a>
    </div>
  </div>
</footer>
</body>
</html>
